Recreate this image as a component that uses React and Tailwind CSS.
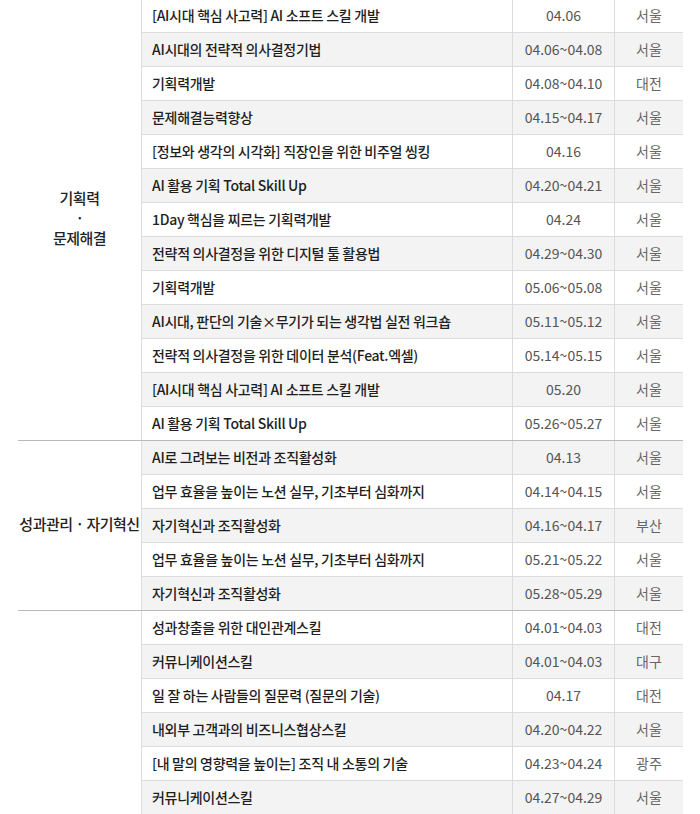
import React from "react";

const groups = [
  {
    label: ["기획력", "·", "문제해결"],
    rows: [
      ["[AI시대 핵심 사고력] AI 소프트 스킬 개발", "04.06", "서울"],
      ["AI시대의 전략적 의사결정기법", "04.06~04.08", "서울"],
      ["기획력개발", "04.08~04.10", "대전"],
      ["문제해결능력향상", "04.15~04.17", "서울"],
      ["[정보와 생각의 시각화] 직장인을 위한 비주얼 씽킹", "04.16", "서울"],
      ["AI 활용 기획 Total Skill Up", "04.20~04.21", "서울"],
      ["1Day 핵심을 찌르는 기획력개발", "04.24", "서울"],
      ["전략적 의사결정을 위한 디지털 툴 활용법", "04.29~04.30", "서울"],
      ["기획력개발", "05.06~05.08", "서울"],
      ["AI시대, 판단의 기술×무기가 되는 생각법 실전 워크숍", "05.11~05.12", "서울"],
      ["전략적 의사결정을 위한 데이터 분석(Feat.엑셀)", "05.14~05.15", "서울"],
      ["[AI시대 핵심 사고력] AI 소프트 스킬 개발", "05.20", "서울"],
      ["AI 활용 기획 Total Skill Up", "05.26~05.27", "서울"],
    ],
  },
  {
    label: ["성과관리 · 자기혁신"],
    rows: [
      ["AI로 그려보는 비전과 조직활성화", "04.13", "서울"],
      ["업무 효율을 높이는 노션 실무, 기초부터 심화까지", "04.14~04.15", "서울"],
      ["자기혁신과 조직활성화", "04.16~04.17", "부산"],
      ["업무 효율을 높이는 노션 실무, 기초부터 심화까지", "05.21~05.22", "서울"],
      ["자기혁신과 조직활성화", "05.28~05.29", "서울"],
    ],
  },
  {
    label: [],
    rows: [
      ["성과창출을 위한 대인관계스킬", "04.01~04.03", "대전"],
      ["커뮤니케이션스킬", "04.01~04.03", "대구"],
      ["일 잘 하는 사람들의 질문력 (질문의 기술)", "04.17", "대전"],
      ["내외부 고객과의 비즈니스협상스킬", "04.20~04.22", "서울"],
      ["[내 말의 영향력을 높이는] 조직 내 소통의 기술", "04.23~04.24", "광주"],
      ["커뮤니케이션스킬", "04.27~04.29", "서울"],
    ],
  },
];

export default function App() {
  let idx = 0;
  return (
    <div
      className="w-[700px] h-[814px] overflow-hidden bg-white"
      style={{ fontFamily: '"Noto Sans CJK KR", "Noto Sans", sans-serif' }}
    >
      <div className="ml-[18px] w-[665px] -mt-[1px]">
        {groups.map((g, gi) => (
          <div key={gi} className="flex border-b border-[#b9b9b9]">
            <div className="w-[123px] shrink-0 flex flex-col items-center justify-center text-[15px] font-medium leading-[20px] text-[#222] tracking-[-0.5px] pb-[3px]">
              {g.label.map((l, li) => (
                <div key={li}>{l}</div>
              ))}
            </div>
            <div className="flex-1 border-l border-[#dcdcdc]">
              {g.rows.map((r, ri) => {
                const gray = idx++ % 2 === 1;
                const last = ri === g.rows.length - 1;
                return (
                  <div
                    key={ri}
                    className={`flex ${last ? "h-[33px]" : "h-[34px] border-b border-[#dcdcdc]"} ${gray ? "bg-[#f3f3f3]" : "bg-white"}`}
                  >
                    <div className="w-[370px] flex items-center pl-[10px] text-[14px] font-medium text-[#1e1e1e] tracking-[-0.3px] whitespace-nowrap">
                      {r[0]}
                    </div>
                    <div className="w-[102px] flex items-center justify-center border-l border-[#dcdcdc] text-[14px] text-[#555]">
                      {r[1]}
                    </div>
                    <div className="flex-1 flex items-center justify-center border-l border-[#dcdcdc] text-[14px] text-[#666]">
                      {r[2]}
                    </div>
                  </div>
                );
              })}
            </div>
          </div>
        ))}
      </div>
    </div>
  );
}
